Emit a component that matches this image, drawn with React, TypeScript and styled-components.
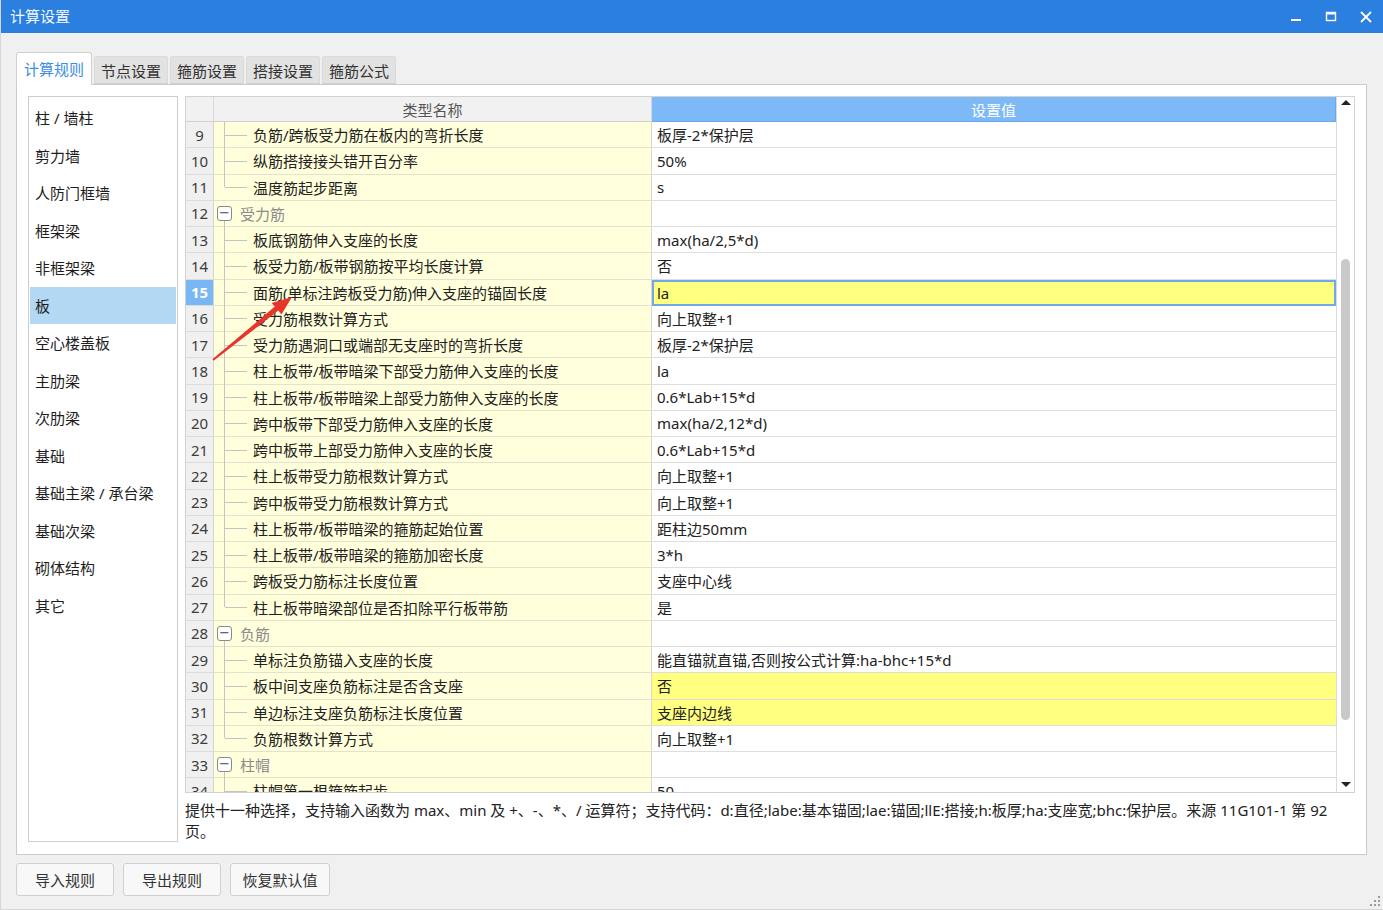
import React from "react";
import styled, { createGlobalStyle } from "styled-components";

type TRow = {
    no: number,
    kind: "item" | "group",
    name: string,
    value?: string,
    last?: boolean,
    hl?: boolean,
    selected?: boolean,
}

const rows: TRow[] = [
    { no: 9, kind: "item", name: "负筋/跨板受力筋在板内的弯折长度", value: "板厚-2*保护层" },
    { no: 10, kind: "item", name: "纵筋搭接接头错开百分率", value: "50%" },
    { no: 11, kind: "item", name: "温度筋起步距离", value: "s", last: true },
    { no: 12, kind: "group", name: "受力筋" },
    { no: 13, kind: "item", name: "板底钢筋伸入支座的长度", value: "max(ha/2,5*d)" },
    { no: 14, kind: "item", name: "板受力筋/板带钢筋按平均长度计算", value: "否" },
    { no: 15, kind: "item", name: "面筋(单标注跨板受力筋)伸入支座的锚固长度", value: "la", selected: true },
    { no: 16, kind: "item", name: "受力筋根数计算方式", value: "向上取整+1" },
    { no: 17, kind: "item", name: "受力筋遇洞口或端部无支座时的弯折长度", value: "板厚-2*保护层" },
    { no: 18, kind: "item", name: "柱上板带/板带暗梁下部受力筋伸入支座的长度", value: "la" },
    { no: 19, kind: "item", name: "柱上板带/板带暗梁上部受力筋伸入支座的长度", value: "0.6*Lab+15*d" },
    { no: 20, kind: "item", name: "跨中板带下部受力筋伸入支座的长度", value: "max(ha/2,12*d)" },
    { no: 21, kind: "item", name: "跨中板带上部受力筋伸入支座的长度", value: "0.6*Lab+15*d" },
    { no: 22, kind: "item", name: "柱上板带受力筋根数计算方式", value: "向上取整+1" },
    { no: 23, kind: "item", name: "跨中板带受力筋根数计算方式", value: "向上取整+1" },
    { no: 24, kind: "item", name: "柱上板带/板带暗梁的箍筋起始位置", value: "距柱边50mm" },
    { no: 25, kind: "item", name: "柱上板带/板带暗梁的箍筋加密长度", value: "3*h" },
    { no: 26, kind: "item", name: "跨板受力筋标注长度位置", value: "支座中心线" },
    { no: 27, kind: "item", name: "柱上板带暗梁部位是否扣除平行板带筋", value: "是", last: true },
    { no: 28, kind: "group", name: "负筋" },
    { no: 29, kind: "item", name: "单标注负筋锚入支座的长度", value: "能直锚就直锚,否则按公式计算:ha-bhc+15*d" },
    { no: 30, kind: "item", name: "板中间支座负筋标注是否含支座", value: "否", hl: true },
    { no: 31, kind: "item", name: "单边标注支座负筋标注长度位置", value: "支座内边线", hl: true },
    { no: 32, kind: "item", name: "负筋根数计算方式", value: "向上取整+1", last: true },
    { no: 33, kind: "group", name: "柱帽" },
    { no: 34, kind: "item", name: "柱帽第一根箍筋起步", value: "50" },
];

const categories = [
    "柱 / 墙柱", "剪力墙", "人防门框墙", "框架梁", "非框架梁", "板", "空心楼盖板",
    "主肋梁", "次肋梁", "基础", "基础主梁 / 承台梁", "基础次梁", "砌体结构", "其它",
];

const tabs = ["计算规则", "节点设置", "箍筋设置", "搭接设置", "箍筋公式"];

const App = () => (
    <>
        <GlobalStyle />
        <Window>
            <TitleBar>
                <Title>计算设置</Title>
                <WinControls>
                    <svg width="14" height="14" viewBox="0 0 14 14">
                        <rect x="2" y="9" width="10" height="2" fill="#fff" />
                    </svg>
                    <svg width="14" height="14" viewBox="0 0 14 14">
                        <rect x="2.5" y="2.5" width="9" height="8" fill="none" stroke="#fff" strokeWidth="1.4" />
                        <rect x="2.5" y="2.5" width="9" height="2" fill="#fff" />
                    </svg>
                    <svg width="14" height="14" viewBox="0 0 14 14">
                        <path d="M2 2 L12 12 M12 2 L2 12" stroke="#fff" strokeWidth="1.8" />
                    </svg>
                </WinControls>
            </TitleBar>
            <Body>
                <TabStrip>
                    {tabs.map((t, i) => (
                        <Tab key={t} $active={i === 0}>{t}</Tab>
                    ))}
                </TabStrip>
                <Panel>
                    <SideList>
                        {categories.map((c) => (
                            <SideItem key={c} $active={c === "板"}>{c}</SideItem>
                        ))}
                    </SideList>
                    <Main>
                        <Grid>
                            <Table>
                                <HeaderRow>
                                    <HeadCell />
                                    <HeadCell>类型名称</HeadCell>
                                    <HeadCell $blue>设置值</HeadCell>
                                </HeaderRow>
                                <Rows>
                                    {rows.map((r) => (
                                        <Row key={r.no}>
                                            <NumCell $selected={r.selected}>{r.no}</NumCell>
                                            {r.kind === "group" ? (
                                                <NameCell $group>
                                                    <Toggle>−</Toggle>
                                                    <GroupLine />
                                                    {r.name}
                                                </NameCell>
                                            ) : (
                                                <NameCell>
                                                    <Branch $last={r.last} />
                                                    {r.name}
                                                </NameCell>
                                            )}
                                            <ValueCell $hl={r.hl} $selected={r.selected}>{r.value}</ValueCell>
                                        </Row>
                                    ))}
                                </Rows>
                            </Table>
                            <ScrollBar>
                                <ScrollArrow $down={false} />
                                <Track>
                                    <Thumb />
                                </Track>
                                <ScrollArrow $down />
                            </ScrollBar>
                        </Grid>
                        <Hint>
                            提供十一种选择，支持输入函数为 max、min 及 +、-、*、/ 运算符；支持代码：d:直径;labe:基本锚固;lae:锚固;llE:搭接;h:板厚;ha:支座宽;bhc:保护层。来源 11G101-1 第 92 页。
                        </Hint>
                    </Main>
                </Panel>
                <ButtonBar>
                    <Button>导入规则</Button>
                    <Button>导出规则</Button>
                    <Button $wide>恢复默认值</Button>
                </ButtonBar>
            </Body>
            <Annotation width="1383" height="910" viewBox="0 0 1383 910">
                <polygon
                    points="212.6,360.8 277.4,310.6 280.4,314.6 291,297 270.6,303.0 273.8,306.6 211.4,359.2"
                    fill="#e8352b"
                />
            </Annotation>
            <Grip>
                <svg width="10" height="10" viewBox="0 0 10 10">
                    <rect x="8" y="0" width="2" height="2" fill="#9a9a9a" />
                    <rect x="4" y="4" width="2" height="2" fill="#9a9a9a" />
                    <rect x="8" y="4" width="2" height="2" fill="#9a9a9a" />
                    <rect x="0" y="8" width="2" height="2" fill="#9a9a9a" />
                    <rect x="4" y="8" width="2" height="2" fill="#9a9a9a" />
                    <rect x="8" y="8" width="2" height="2" fill="#9a9a9a" />
                </svg>
            </Grip>
        </Window>
    </>
);

const GlobalStyle = createGlobalStyle`
    html, body {
        margin: 0;
        padding: 0;
        background: #f0f0f0;
    }

    body {
        font-family: "Noto Sans", "Noto Sans CJK SC", sans-serif;
        color: #222;
    }

    * {
        box-sizing: border-box;
    }
`

const Window = styled.div`
    position: relative;
    width: 1383px;
    height: 910px;
    display: flex;
    flex-direction: column;
    background: #f0f0f0;
    border-left: 1px solid #d6d6d6;
    border-bottom: 1px solid #d6d6d6;
    overflow: hidden;
`

const TitleBar = styled.div`
    height: 33px;
    flex: none;
    background: #2b7fde;
    display: flex;
    align-items: center;
    justify-content: space-between;
    padding: 0 10px 0 9px;
`

const Title = styled.div`
    color: #f4f8ff;
    font-size: 15px;
    line-height: 33px;
`

const WinControls = styled.div`
    display: flex;
    align-items: center;
    column-gap: 21px;
`

const Body = styled.div`
    flex: 1;
    display: flex;
    flex-direction: column;
    padding: 19px 16px 0 15px;
`

const TabStrip = styled.div`
    height: 32px;
    display: flex;
    align-items: flex-end;
    column-gap: 2px;
    position: relative;
    z-index: 1;
`

const Tab = styled.div<{ $active?: boolean }>`
    height: ${(p) => (p.$active ? "33px" : "28px")};
    margin-bottom: ${(p) => (p.$active ? "-1px" : "0")};
    width: ${(p) => (p.$active ? "76px" : "74px")};
    display: flex;
    align-items: center;
    justify-content: center;
    font-size: 15px;
    color: ${(p) => (p.$active ? "#3b8ee8" : "#333")};
    background: ${(p) => (p.$active ? "#fff" : "#e2e2e2")};
    border: 1px solid ${(p) => (p.$active ? "#cfcfcf" : "#dadada")};
    border-bottom: ${(p) => (p.$active ? "none" : "1px solid #cfcfcf")};
    border-radius: 3px 3px 0 0;
    padding-bottom: ${(p) => (p.$active ? "2px" : "0")};
`

const Panel = styled.div`
    height: 771px;
    flex: none;
    background: #fff;
    border: 1px solid #cbcbcb;
    padding: 11px 11px 12px 11px;
    display: flex;
    column-gap: 7px;
`

const SideList = styled.div`
    width: 150px;
    flex: none;
    border: 1px solid #cdcdcd;
    padding: 2px 1px;
    display: flex;
    flex-direction: column;
`

const SideItem = styled.div<{ $active?: boolean }>`
    height: 37.5px;
    flex: none;
    display: flex;
    align-items: center;
    padding-left: 5px;
    font-size: 15px;
    color: #1e1e1e;
    background: ${(p) => (p.$active ? "#b3d8f4" : "transparent")};
`

const Main = styled.div`
    flex: 1;
    display: flex;
    flex-direction: column;
    min-width: 0;
`

const Grid = styled.div`
    height: 697px;
    flex: none;
    border: 1px solid #d2d2d2;
    display: flex;
`

const Table = styled.div`
    flex: 1;
    display: flex;
    flex-direction: column;
    overflow: hidden;
`

const HeaderRow = styled.div`
    height: 25px;
    flex: none;
    display: grid;
    grid-template-columns: 28px 438px 1fr;
`

const HeadCell = styled.div<{ $blue?: boolean }>`
    display: flex;
    align-items: center;
    justify-content: center;
    font-size: 15px;
    color: ${(p) => (p.$blue ? "#fff" : "#555")};
    background: ${(p) => (p.$blue ? "#7db9f6" : "#f1f1f1")};
    border-right: 1px solid ${(p) => (p.$blue ? "#6aa8ec" : "#d8d8d8")};
    border-bottom: 1px solid ${(p) => (p.$blue ? "#6aa8ec" : "#d0d0d0")};
`

const Rows = styled.div`
    flex: 1;
    overflow: hidden;
`

const Row = styled.div`
    height: 26.25px;
    display: grid;
    grid-template-columns: 28px 438px 1fr;
    font-size: 15px;
`

const NumCell = styled.div<{ $selected?: boolean }>`
    display: flex;
    align-items: center;
    justify-content: center;
    background: ${(p) => (p.$selected ? "#79b7f4" : "#f0f0f0")};
    color: ${(p) => (p.$selected ? "#fff" : "#3c3c3c")};
    font-weight: ${(p) => (p.$selected ? 700 : 400)};
    border-right: 1px solid #d4d4d4;
    border-bottom: 1px solid #dcdcdc;
`

const NameCell = styled.div<{ $group?: boolean }>`
    position: relative;
    display: flex;
    align-items: center;
    padding-left: ${(p) => (p.$group ? "26px" : "39px")};
    background: #ffffdc;
    color: ${(p) => (p.$group ? "#8c8c8c" : "#222")};
    border-right: 1px solid #d8d8d8;
    border-bottom: 1px solid #e2e2d0;
    white-space: nowrap;
`

// tree connector: vertical rail plus a short branch to the label
const Branch = styled.span<{ $last?: boolean }>`
    position: absolute;
    left: 10px;
    top: 0;
    width: 22px;
    height: ${(p) => (p.$last ? "50%" : "calc(100% + 1px)")};
    border-left: 1px solid #c4c4c4;

    &::after {
        content: "";
        position: absolute;
        left: 0;
        top: 12.5px;
        width: 22px;
        border-top: 1px solid #c4c4c4;
    }
`

const GroupLine = styled.span`
    position: absolute;
    left: 10px;
    top: 20px;
    bottom: -1px;
    border-left: 1px solid #c4c4c4;
`

const Toggle = styled.span`
    position: absolute;
    left: 3px;
    top: 5px;
    width: 15px;
    height: 15px;
    border: 1px solid #8a8a8a;
    border-radius: 3px;
    background: #fff;
    color: #444;
    font-size: 13px;
    line-height: 12px;
    text-align: center;
    font-family: "DejaVu Sans", sans-serif;
`

const ValueCell = styled.div<{ $hl?: boolean, $selected?: boolean }>`
    display: flex;
    align-items: center;
    padding-left: ${(p) => (p.$selected ? "3px" : "5px")};
    background: ${(p) => (p.$hl || p.$selected ? "#ffff80" : "#fff")};
    border-bottom: 1px solid #dedede;
    border: ${(p) => (p.$selected ? "2px solid #6fa9ec" : "")};
    color: #222;
    white-space: nowrap;
`

const ScrollBar = styled.div`
    width: 18px;
    flex: none;
    border-left: 1px solid #dcdcdc;
    background: #fff;
    display: flex;
    flex-direction: column;
    align-items: center;
`

const ScrollArrow = styled.div<{ $down?: boolean }>`
    width: 0;
    height: 0;
    margin: ${(p) => (p.$down ? "4px 0 5px" : "3px 0 4px")};
    border-left: 5px solid transparent;
    border-right: 5px solid transparent;
    border-bottom: ${(p) => (p.$down ? "none" : "5px solid #222")};
    border-top: ${(p) => (p.$down ? "5px solid #222" : "none")};
`

const Track = styled.div`
    flex: 1;
    width: 100%;
    display: flex;
    justify-content: center;
    padding-top: 150px;
    padding-bottom: 58px;
`

const Thumb = styled.div`
    width: 9px;
    height: 100%;
    border-radius: 5px;
    background: #c9c9c9;
`

const Hint = styled.div`
    margin-top: 7px;
    font-size: 15px;
    line-height: 21px;
    color: #222;
    padding-right: 8px;
`

const ButtonBar = styled.div`
    display: flex;
    column-gap: 9px;
    margin-top: 8px;
`

const Button = styled.button<{ $wide?: boolean }>`
    width: ${(p) => (p.$wide ? "100px" : "98px")};
    height: 33px;
    background: #f8f8f8;
    border: 1px solid #d0d0d0;
    border-radius: 3px;
    font-family: "Noto Sans", "Noto Sans CJK SC", sans-serif;
    font-size: 15px;
    color: #333;
    padding: 0;
`

const Annotation = styled.svg`
    position: absolute;
    left: 0;
    top: 0;
    pointer-events: none;
`

const Grip = styled.div`
    position: absolute;
    right: 3px;
    bottom: 3px;
    line-height: 0;
`

export default App;
